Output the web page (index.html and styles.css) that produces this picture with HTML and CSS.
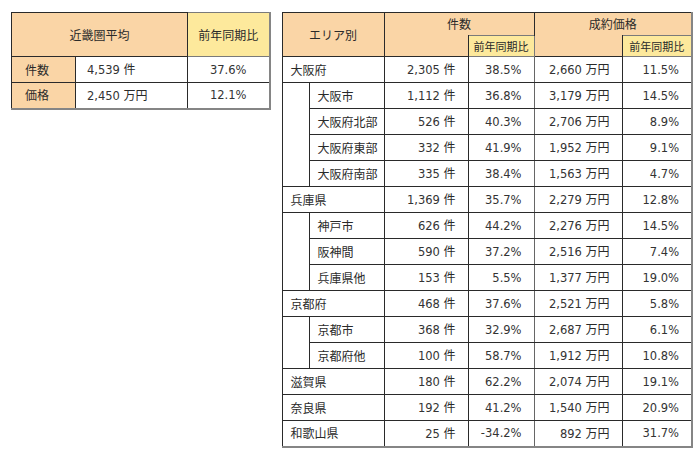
FILE: index.html
```html
<!DOCTYPE html>
<html lang="ja">
<head>
<meta charset="utf-8">
<link rel="stylesheet" href="styles.css">
</head>
<body>
<div class="page">
  <table class="tbl summary">
    <colgroup><col class="c-l1"><col class="c-l2"><col class="c-l3"></colgroup>
    <tr class="hrow">
      <th class="hd" colspan="2">近畿圏平均</th>
      <th class="yl">前年同期比</th>
    </tr>
    <tr class="row">
      <th class="hd side">件数</th>
      <td class="val">4,539 <span class="u">件</span></td>
      <td class="ctr">37.6%</td>
    </tr>
    <tr class="row">
      <th class="hd side">価格</th>
      <td class="val">2,450 <span class="u">万円</span></td>
      <td class="ctr">12.1%</td>
    </tr>
  </table>

  <table class="tbl area">
    <colgroup><col class="c-in"><col class="c-nm"><col class="c-cn"><col class="c-cr"><col class="c-pr"><col class="c-pp"></colgroup>
    <tr class="h1">
      <th class="hd" colspan="2" rowspan="2">エリア別</th>
      <th class="hd nob" colspan="2">件数</th>
      <th class="hd nob" colspan="2">成約価格</th>
    </tr>
    <tr class="h2">
      <th class="hd not"></th>
      <th class="yl sm">前年同期比</th>
      <th class="hd not"></th>
      <th class="yl sm">前年同期比</th>
    </tr>
    <tr class="row"><td class="lbl" colspan="2">大阪府</td><td class="num">2,305 <span class="u">件</span></td><td class="num g">38.5%</td><td class="num">2,660 <span class="u">万円</span></td><td class="num g">11.5%</td></tr>
    <tr class="row"><td class="ind" rowspan="4"></td><td class="lbl">大阪市</td><td class="num">1,112 <span class="u">件</span></td><td class="num g">36.8%</td><td class="num">3,179 <span class="u">万円</span></td><td class="num g">14.5%</td></tr>
    <tr class="row"><td class="lbl">大阪府北部</td><td class="num">526 <span class="u">件</span></td><td class="num g">40.3%</td><td class="num">2,706 <span class="u">万円</span></td><td class="num g">8.9%</td></tr>
    <tr class="row"><td class="lbl">大阪府東部</td><td class="num">332 <span class="u">件</span></td><td class="num g">41.9%</td><td class="num">1,952 <span class="u">万円</span></td><td class="num g">9.1%</td></tr>
    <tr class="row"><td class="lbl">大阪府南部</td><td class="num">335 <span class="u">件</span></td><td class="num g">38.4%</td><td class="num">1,563 <span class="u">万円</span></td><td class="num g">4.7%</td></tr>
    <tr class="row"><td class="lbl" colspan="2">兵庫県</td><td class="num">1,369 <span class="u">件</span></td><td class="num g">35.7%</td><td class="num">2,279 <span class="u">万円</span></td><td class="num g">12.8%</td></tr>
    <tr class="row"><td class="ind" rowspan="3"></td><td class="lbl">神戸市</td><td class="num">626 <span class="u">件</span></td><td class="num g">44.2%</td><td class="num">2,276 <span class="u">万円</span></td><td class="num g">14.5%</td></tr>
    <tr class="row"><td class="lbl">阪神間</td><td class="num">590 <span class="u">件</span></td><td class="num g">37.2%</td><td class="num">2,516 <span class="u">万円</span></td><td class="num g">7.4%</td></tr>
    <tr class="row"><td class="lbl">兵庫県他</td><td class="num">153 <span class="u">件</span></td><td class="num g">5.5%</td><td class="num">1,377 <span class="u">万円</span></td><td class="num g">19.0%</td></tr>
    <tr class="row"><td class="lbl" colspan="2">京都府</td><td class="num">468 <span class="u">件</span></td><td class="num g">37.6%</td><td class="num">2,521 <span class="u">万円</span></td><td class="num g">5.8%</td></tr>
    <tr class="row"><td class="ind" rowspan="2"></td><td class="lbl">京都市</td><td class="num">368 <span class="u">件</span></td><td class="num g">32.9%</td><td class="num">2,687 <span class="u">万円</span></td><td class="num g">6.1%</td></tr>
    <tr class="row"><td class="lbl">京都府他</td><td class="num">100 <span class="u">件</span></td><td class="num g">58.7%</td><td class="num">1,912 <span class="u">万円</span></td><td class="num g">10.8%</td></tr>
    <tr class="row"><td class="lbl" colspan="2">滋賀県</td><td class="num">180 <span class="u">件</span></td><td class="num g">62.2%</td><td class="num">2,074 <span class="u">万円</span></td><td class="num g">19.1%</td></tr>
    <tr class="row"><td class="lbl" colspan="2">奈良県</td><td class="num">192 <span class="u">件</span></td><td class="num g">41.2%</td><td class="num">1,540 <span class="u">万円</span></td><td class="num g">20.9%</td></tr>
    <tr class="row"><td class="lbl" colspan="2">和歌山県</td><td class="num">25 <span class="u">件</span></td><td class="num g">-34.2%</td><td class="num">892 <span class="u">万円</span></td><td class="num g">31.7%</td></tr>
  </table>
</div>
</body>
</html>
```
FILE: styles.css
```css
html, body {
  margin: 0;
  padding: 0;
  background: #fff;
}
body {
  font-family: "Noto Sans CJK JP", "Noto Sans", sans-serif;
  font-size: 12px;
  color: #2a2a2a;
}
.page {
  display: flex;
  align-items: flex-start;
  gap: 11px;
  padding: 12px 0 0 11px;
}
.tbl {
  border-collapse: collapse;
  table-layout: fixed;
  border-top: 1px solid #858585;
  border-left: 1px solid #858585;
  border-right: 2px solid #858585;
  border-bottom: 2px solid #858585;
}
.tbl th, .tbl td {
  border: 1px solid #2a2a2a;
  padding: 0;
  line-height: 14px;
  white-space: nowrap;
  font-weight: 400;
}
.summary { width: 258px; }
.c-l1 { width: 64px; }
.c-l2 { width: 112px; }
.c-l3 { width: 82px; }
.area { width: 410px; }
.c-in { width: 27px; }
.c-nm { width: 75px; }
.c-cn { width: 84px; }
.c-cr { width: 66px; }
.c-pr { width: 88px; }
.c-pp { width: 70px; }

.hd { background: #fad5a6; text-align: center; }
.yl { background: #fde99c; text-align: center; border-color: #7a7a7a !important; }
.side { text-align: left; padding-left: 13px !important; }
.hrow { height: 44px; }
.h1 { height: 23px; }
.h2 { height: 21px; }
.row { height: 26px; }
.sm { font-size: 11px; }
.nob { border-bottom: none !important; }
.not { border-top: none !important; }
.val, .ctr, .num {
  font-family: "DejaVu Sans", "Noto Sans CJK JP", sans-serif;
  font-size: 11.5px;
  color: #333;
}
.u {
  font-family: "Noto Sans CJK JP", sans-serif;
  font-size: 12px;
  color: #2a2a2a;
}
.val { text-align: left; padding-left: 11px !important; }
.ctr { text-align: center; border-left-color: #555 !important; }
.lbl { text-align: left; padding-left: 8px !important; }
.num { text-align: right; padding-right: 12px !important; }
.g { border-left-color: #666 !important; border-right-color: #666 !important; }
.ind { border-bottom: 1px solid #2a2a2a; }
```
